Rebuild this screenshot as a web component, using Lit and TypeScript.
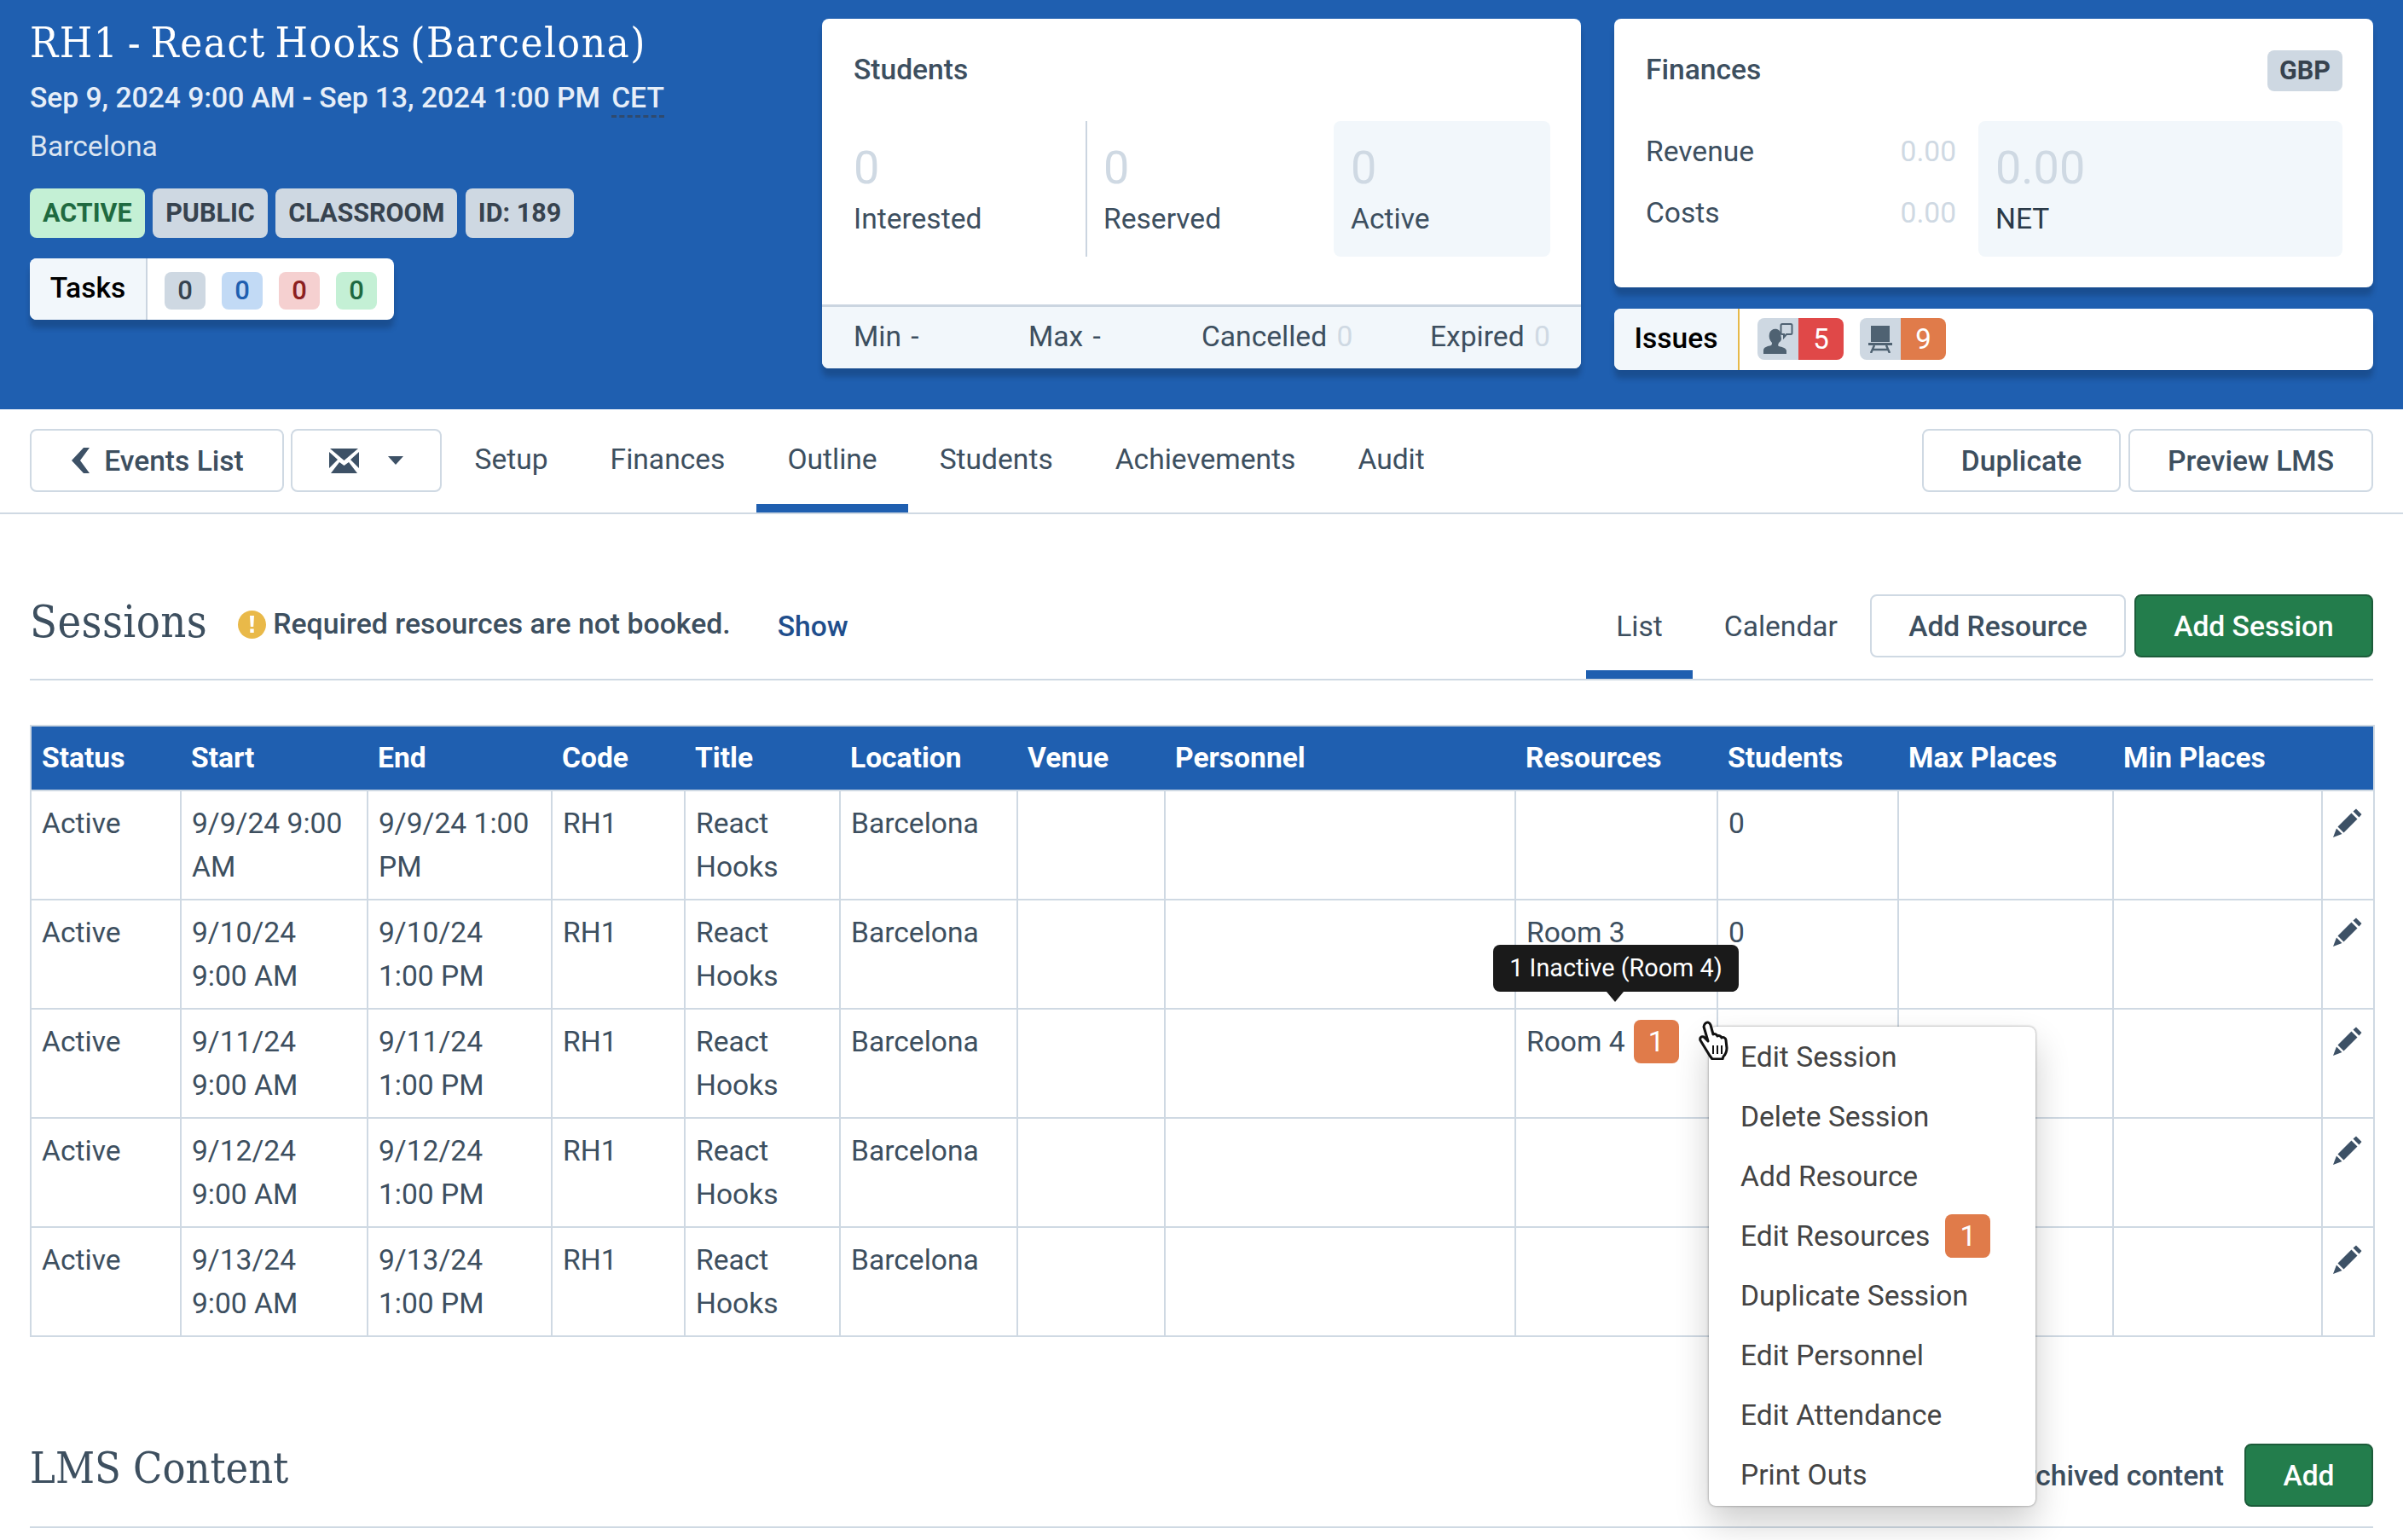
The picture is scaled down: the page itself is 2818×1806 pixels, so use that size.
import { LitElement, html, css, svg } from "lit";
import { customElement } from "lit/decorators.js";

const rows = [
  { start: "9/9/24 9:00 AM", end: "9/9/24 1:00 PM", res: "", students: "0" },
  { start: "9/10/24 9:00 AM", end: "9/10/24 1:00 PM", res: "Room 3", students: "0" },
  { start: "9/11/24 9:00 AM", end: "9/11/24 1:00 PM", res: "Room 4", badge: "1", students: "" },
  { start: "9/12/24 9:00 AM", end: "9/12/24 1:00 PM", res: "", students: "" },
  { start: "9/13/24 9:00 AM", end: "9/13/24 1:00 PM", res: "", students: "" },
];

const colWidths = [176, 219, 216, 156, 182, 208, 173, 411, 237, 212, 252, 245, 61];
const heads = ["Status", "Start", "End", "Code", "Title", "Location", "Venue", "Personnel", "Resources", "Students", "Max Places", "Min Places", ""];
const menuItems = ["Edit Session", "Delete Session", "Add Resource", "Edit Resources", "Duplicate Session", "Edit Personnel", "Edit Attendance", "Print Outs"];

const pencil = svg`<svg class="pencil" viewBox="0 0 34 35"><path d="M27 1.500l6.500 6.500-3 3.500-7-7zM21.500 6.500l7 7L12.500 29.500l-7-7zM4 24.500l6.500 6.500L0 35z" fill="#3d5166"/></svg>`;

@customElement("app-root")
export class AppRoot extends LitElement {
  static styles = css`
    :host {
      display: block;
      position: relative;
      height: 1806px;
      overflow: hidden;
      background: #fff;
      font-family: Roboto, "Liberation Sans", sans-serif;
      font-size: 33.6px;
      line-height: 51px;
      color: #3d4f5f;
    }
    .slab { font-family: "DejaVu Serif Condensed", "DejaVu Serif", serif; font-weight: 400; }

    /* header */
    .header {
      height: 480px;
      box-sizing: border-box;
      background: #1f5fb0;
      padding: 22px 35px 0;
      display: flex;
      color: #e6eef8;
    }
    .summary { width: 929px; }
    .summary h1 {
      margin: 1px 0 0;
      font-size: 49px;
      line-height: 56px;
      letter-spacing: 1.5px;
      word-spacing: -5px;
      color: #fff;
    }
    .date { margin-top: 11px; font-weight: 500; line-height: 50px; }
    .tz { border-bottom: 3px dashed #2f4a6e; margin-left: 5px; padding-bottom: 1px; }
    .place { margin-top: 7px; line-height: 50px; color: #dbe5f1; }
    .labels { display: flex; gap: 9.500px; margin-top: 24px; }
    .label {
      height: 58px;
      padding: 0 15px;
      border-radius: 8px;
      background: #ced8e2;
      color: #37434f;
      font-size: 30.500px;
      line-height: 58px;
      font-weight: 700;
    }
    .label.green { background: #c4f0d5; color: #1f6a40; }
    .tasks {
      display: inline-flex;
      margin-top: 24px;
      height: 72px;
      background: #fff;
      border-radius: 8px;
      box-shadow: 0 10px 6px rgba(0, 0, 0, 0.18);
      overflow: hidden;
      color: #000;
      font-weight: 500;
    }
    .tasks-name {
      width: 138px;
      box-sizing: border-box;
      text-align: center;
      line-height: 70px;
      background: #f2f7fb;
      border-right: 2px solid #cbd5e0;
    }
    .task-counts { display: flex; gap: 19px; padding: 16px 20px 0 20px; }
    .count {
      width: 48px;
      height: 44px;
      border-radius: 8px;
      text-align: center;
      font-size: 31px;
      line-height: 44px;
    }
    .c-grey { background: #ced8e2; color: #37434f; }
    .c-blue { background: #c2daf5; color: #1f5fb0; }
    .c-red { background: #f5d0d0; color: #8c2020; }
    .c-green { background: #c4f0d5; color: #1f6a40; }

    .card {
      background: #fff;
      border-radius: 8px;
      color: #3d4f5f;
      box-shadow: 0 10px 6px rgba(0, 0, 0, 0.18);
    }
    .students { width: 890px; height: 410px; display: flex; flex-direction: column; overflow: hidden; }
    .card h2 { margin: 0; font-size: 33.6px; font-weight: 500; line-height: 50px; }
    .students-body { flex: 1; padding: 35px 36px 0 37px; }
    .stats { display: flex; height: 159px; margin-top: 35px; }
    .stat { padding-top: 25px; }
    .stat-num { font-size: 54px; line-height: 60px; color: #cfd9e3; }
    .stat-label { line-height: 50px; margin-top: 5px; }
    .stat.first { width: 272px; border-right: 2px solid #cbd5e0; }
    .stat.second { flex: 1; padding-left: 19px; }
    .stat.active { width: 254px; box-sizing: border-box; padding-left: 20px; background: #f2f7fb; border-radius: 8px; }
    .students-foot {
      height: 75px;
      box-sizing: border-box;
      border-top: 3px solid #cbd5e0;
      background: #f2f7fb;
      display: grid;
      grid-template-columns: 205px 203px 268px 1fr;
      padding: 0 36px 0 37px;
      line-height: 70px;
      word-spacing: 3px;
      white-space: nowrap;
    }
    .dim { color: #cfd9e3; }

    .right-col { width: 890px; margin-left: 39px; display: flex; flex-direction: column; gap: 25px; }
    .finances { height: 315px; box-sizing: border-box; padding: 35px 36px 0 37px; }
    .fin-head { display: flex; justify-content: space-between; height: 50px; }
    .fin-head .label { height: 48px; line-height: 48px; padding: 0 14px; margin-top: 2px; }
    .fin-body { display: flex; margin-top: 35px; height: 159px; }
    .fin-rows { width: 364px; padding-top: 11px; }
    .fin-row { display: flex; justify-content: space-between; height: 72px; line-height: 50px; }
    .net { margin-left: 26px; flex: 1; padding: 25px 20px 0; background: #f2f7fb; border-radius: 8px; }
    .net .stat-label { color: #2b3a48; }
    .issues { height: 72px; display: flex; overflow: hidden; }
    .issues-name {
      width: 147px;
      box-sizing: border-box;
      text-align: center;
      line-height: 70px;
      background: #f2f7fb;
      border-right: 2px solid #e6b94a;
      color: #000;
      font-weight: 500;
    }
    .issue-list { display: flex; gap: 19px; padding: 11px 0 0 21px; }
    .issue { display: flex; height: 49px; border-radius: 8px; overflow: hidden; }
    .issue-icon { width: 48px; background: #ced8e2; display: flex; align-items: center; justify-content: center; }
    .issue-num { width: 53px; text-align: center; color: #fff; line-height: 49px; font-size: 33px; }
    .issue-num.red { background: #e04848; }
    .issue-num.orange { background: #e07b4a; }

    /* tab bar */
    .tabbar {
      height: 123px;
      box-sizing: border-box;
      border-bottom: 2px solid #cfd9e3;
      padding: 0 35px;
      display: flex;
      font-weight: 400;
    }
    .btn {
      height: 74px;
      box-sizing: border-box;
      border: 2px solid #cfd9e3;
      border-radius: 8px;
      background: #fff;
      color: #3d4f5f;
      font-weight: 500;
      display: flex;
      align-items: center;
      justify-content: center;
    }
    .btn.green { background: #237d4c; border-color: #1c5c3a; color: #fff; }
    .tabbar .btn { margin-top: 23px; }
    .btn-back { width: 298px; gap: 17px; padding-left: 2px; }
    .btn-mail { width: 177px; margin-left: 8px; gap: 34px; }
    .tabs { display: flex; margin-left: 2px; }
    .tab {
      height: 121px;
      box-sizing: border-box;
      padding: 0 36.500px;
      line-height: 72px;
      padding-top: 23px;
    }
    .tab.on { border-bottom: 10px solid #1f5fb0; }
    .grow { flex: 1; }
    .tabbar .btn + .btn.second { margin-left: 9px; }

    /* sections */
    .section-head {
      margin: 0 35px;
      height: 195px;
      box-sizing: border-box;
      border-bottom: 2px solid #cfd9e3;
      display: flex;
      align-items: flex-start;
    }
    .section-title { font-size: 52px; line-height: 70px; margin-top: 91px; color: #3d4f5f; letter-spacing: 0.4px; }
    .notice { display: flex; align-items: center; gap: 8px; margin: 104px 0 0 36px; font-size: 33.8px; font-weight: 500; line-height: 50px; }
    .notice svg { width: 33px; height: 33px; }
    .show { margin: 107px 0 0 55px; font-weight: 500; color: #1f4e8c; line-height: 50px; }
    .sub-tabs { display: flex; height: 193px; }
    .sub-tab { padding: 107px 35px 0; height: 193px; box-sizing: border-box; line-height: 50px; }
    .sub-tab.on { border-bottom: 10px solid #1f5fb0; }
    .sub-tab.last { padding-left: 37px; padding-right: 38px; }
    .section-head .btn { margin-top: 94px; }
    .btn-res { width: 300px; }
    .btn-ses { width: 280px; margin-left: 10px; }

    /* table */
    table {
      border-collapse: collapse;
      table-layout: fixed;
      width: 2748px;
      margin: 52px 0 0 35px;
    }
    th {
      height: 76px;
      padding: 0 12px 2px;
      box-sizing: border-box;
      background: #1f5fb0;
      color: #fff;
      font-weight: 700;
      text-align: left;
      border: 2px solid #cfd9e3;
      border-width: 2px 0;
      white-space: nowrap;
    }
    th:first-child { border-left: 2px solid #cfd9e3; }
    th:last-child { border-right: 2px solid #cfd9e3; }
    td {
      height: 128px;
      box-sizing: border-box;
      padding: 12px 12px 0;
      border: 2px solid #cfd9e3;
      vertical-align: top;
    }
    .room { display: flex; gap: 10px; align-items: flex-start; }
    .num-badge {
      width: 53px;
      height: 51px;
      border-radius: 8px;
      background: #e07b4a;
      color: #fff;
      text-align: center;
      line-height: 51px;
    }
    .pencil { width: 34px; height: 35px; display: block; margin: 7px 0 0 0; }

    .lms {
      margin: 0 35px;
      height: 224px;
      box-sizing: border-box;
      border-bottom: 2px solid #cfd9e3;
      display: flex;
    }
    .lms .section-title { margin-top: 119px; font-size: 50px; letter-spacing: 0; }
    .archived { margin: 138px 24px 0 0; font-weight: 500; line-height: 50px; white-space: nowrap; }
    .lms .btn { margin-top: 125px; width: 151px; }

    /* overlays */
    .tooltip {
      position: absolute;
      left: 1751px;
      top: 1108px;
      width: 288px;
      height: 55px;
      border-radius: 8px;
      background: #1a1a1a;
      color: #fff;
      font-size: 28.800px;
      line-height: 55px;
      text-align: center;
    }
    .tooltip::after {
      content: "";
      position: absolute;
      left: 133px;
      top: 55px;
      border: 10px solid transparent;
      border-top: 12px solid #1a1a1a;
      border-bottom: 0;
    }
    .menu {
      position: absolute;
      left: 2004px;
      top: 1204px;
      width: 383px;
      height: 562px;
      box-sizing: border-box;
      background: #fff;
      border-radius: 8px;
      box-shadow: 0 0 3px rgba(0, 0, 0, 0.45), 0 20px 40px rgba(0, 0, 0, 0.2);
      color: #444;
    }
    .menu-item { height: 70px; padding-left: 37px; display: flex; align-items: center; gap: 18px; }
    .cursor { position: absolute; left: 1991px; top: 1197px; width: 38px; height: 46px; }
  `;

  renderRow(r: (typeof rows)[number]) {
    return html`<tr>
      <td>Active</td>
      <td>${r.start}</td>
      <td>${r.end}</td>
      <td>RH1</td>
      <td>React Hooks</td>
      <td>Barcelona</td>
      <td></td>
      <td></td>
      <td>${r.badge
        ? html`<div class="room"><span>${r.res}</span><span class="num-badge">${r.badge}</span></div>`
        : r.res}</td>
      <td>${r.students}</td>
      <td></td>
      <td></td>
      <td>${pencil}</td>
    </tr>`;
  }

  render() {
    return html`
      <div class="header">
        <div class="summary">
          <h1 class="slab">RH1 - React Hooks (Barcelona)</h1>
          <div class="date">Sep 9, 2024 9:00 AM - Sep 13, 2024 1:00 PM <span class="tz">CET</span></div>
          <div class="place">Barcelona</div>
          <div class="labels">
            <span class="label green">ACTIVE</span>
            <span class="label">PUBLIC</span>
            <span class="label">CLASSROOM</span>
            <span class="label">ID: 189</span>
          </div>
          <div class="tasks">
            <div class="tasks-name">Tasks</div>
            <div class="task-counts">
              <span class="count c-grey">0</span>
              <span class="count c-blue">0</span>
              <span class="count c-red">0</span>
              <span class="count c-green">0</span>
            </div>
          </div>
        </div>
        <div class="card students">
          <div class="students-body">
            <h2>Students</h2>
            <div class="stats">
              <div class="stat first"><div class="stat-num">0</div><div class="stat-label">Interested</div></div>
              <div class="stat second"><div class="stat-num">0</div><div class="stat-label">Reserved</div></div>
              <div class="stat active"><div class="stat-num">0</div><div class="stat-label">Active</div></div>
            </div>
          </div>
          <div class="students-foot">
            <span>Min -</span>
            <span>Max -</span>
            <span>Cancelled <span class="dim">0</span></span>
            <span>Expired <span class="dim">0</span></span>
          </div>
        </div>
        <div class="right-col">
          <div class="card finances">
            <div class="fin-head"><h2>Finances</h2><span class="label">GBP</span></div>
            <div class="fin-body">
              <div class="fin-rows">
                <div class="fin-row"><span>Revenue</span><span class="dim">0.00</span></div>
                <div class="fin-row"><span>Costs</span><span class="dim">0.00</span></div>
              </div>
              <div class="net"><div class="stat-num">0.00</div><div class="stat-label">NET</div></div>
            </div>
          </div>
          <div class="card issues">
            <div class="issues-name">Issues</div>
            <div class="issue-list">
              <div class="issue">
                <span class="issue-icon">
                  <svg width="38" height="38" viewBox="0 0 38 38"><path d="M2 36v-4c0-4 5-5 9-6 1-1 1-2 1-3-3-3-4-7-3-11 1-4 5-6 9-5 3 1 4 3 4 5l1 6c0 3-2 4-3 5l-1 3 1 1c4 1 8 2 9 5v4z" fill="#4f6272"/><path d="M24 1h10a1.500 1.500 0 0 1 1.500 1.500v9a1.500 1.500 0 0 1-1.500 1.500h-5l-3 3.500V13h-2a1.500 1.500 0 0 1-1.500-1.500v-9A1.500 1.500 0 0 1 24 1z" fill="#ced8e2" stroke="#4f6272" stroke-width="2"/></svg>
                </span>
                <span class="issue-num red">5</span>
              </div>
              <div class="issue">
                <span class="issue-icon">
                  <svg width="28" height="32" viewBox="0 0 28 32"><path d="M3 0h22v19H3zM0 20h28v3H0z" fill="#4f6272"/><path d="M7 23L3 32M21 23l4 9M5 28h18" stroke="#4f6272" stroke-width="2.500" fill="none"/></svg>
                </span>
                <span class="issue-num orange">9</span>
              </div>
            </div>
          </div>
        </div>
      </div>

      <div class="tabbar">
        <div class="btn btn-back">
          <svg width="21" height="30" viewBox="0 0 21 30"><path d="M14 0h7L10 15l11 15h-7L0 15z" fill="#3d5166"/></svg>
          Events List
        </div>
        <div class="btn btn-mail">
          <svg width="35" height="29" viewBox="0 0 35 29"><path d="M1 0h33L17.500 14zM0 4l10 9-10 10zM35 4v19L25 13zM2 29l10-13 5.500 4 5.500-4 10 13z" fill="#3d5166"/></svg>
          <svg width="18" height="10" viewBox="0 0 18 10"><path d="M0 0h18L9 10z" fill="#3d5166"/></svg>
        </div>
        <div class="tabs">
          <div class="tab">Setup</div>
          <div class="tab">Finances</div>
          <div class="tab on">Outline</div>
          <div class="tab">Students</div>
          <div class="tab">Achievements</div>
          <div class="tab">Audit</div>
        </div>
        <div class="grow"></div>
        <div class="btn" style="width:233px">Duplicate</div>
        <div class="btn second" style="width:287px">Preview LMS</div>
      </div>

      <div class="section-head">
        <div class="section-title slab">Sessions</div>
        <div class="notice">
          <svg viewBox="0 0 33 33"><circle cx="16.500" cy="16.500" r="16.500" fill="#e9b949"/><path d="M14 6h5l-.8 13h-3.400zM14.300 21.500h4.400v4.500h-4.400z" fill="#fff"/></svg>
          Required resources are not booked.
        </div>
        <div class="show">Show</div>
        <div class="grow"></div>
        <div class="sub-tabs">
          <div class="sub-tab on">List</div>
          <div class="sub-tab last">Calendar</div>
        </div>
        <div class="btn btn-res">Add Resource</div>
        <div class="btn green btn-ses">Add Session</div>
      </div>

      <table>
        <colgroup>${colWidths.map((w) => html`<col style="width:${w}px" />`)}</colgroup>
        <thead><tr>${heads.map((h) => html`<th>${h}</th>`)}</tr></thead>
        <tbody>${rows.map((r) => this.renderRow(r))}</tbody>
      </table>

      <div class="lms">
        <div class="section-title slab">LMS Content</div>
        <div class="grow"></div>
        <div class="archived">Archived content</div>
        <div class="btn green">Add</div>
      </div>

      <div class="tooltip">1 Inactive (Room 4)</div>
      <div class="menu">
        ${menuItems.map(
          (m) => html`<div class="menu-item">${m}${m === "Edit Resources" ? html`<span class="num-badge">1</span>` : ""}</div>`
        )}
      </div>
      <svg class="cursor" viewBox="0 0 38 46">
        <path d="M9 3c2-2 5-1 6 2l3 11c2-1 4 0 5 2 2-1 4 0 5 2 2-1 5 0 5 3l1 9c0 5-2 8-4 10l-1 3H17l-3-4L3 23c-1-3 1-5 4-4l5 5L7 7c0-2 1-3 2-4z" fill="#fff" stroke="#111" stroke-width="3" stroke-linejoin="round"/>
        <path d="M18 29v10M23 29v10M28 29v10" stroke="#111" stroke-width="2"/>
      </svg>
    `;
  }
}
